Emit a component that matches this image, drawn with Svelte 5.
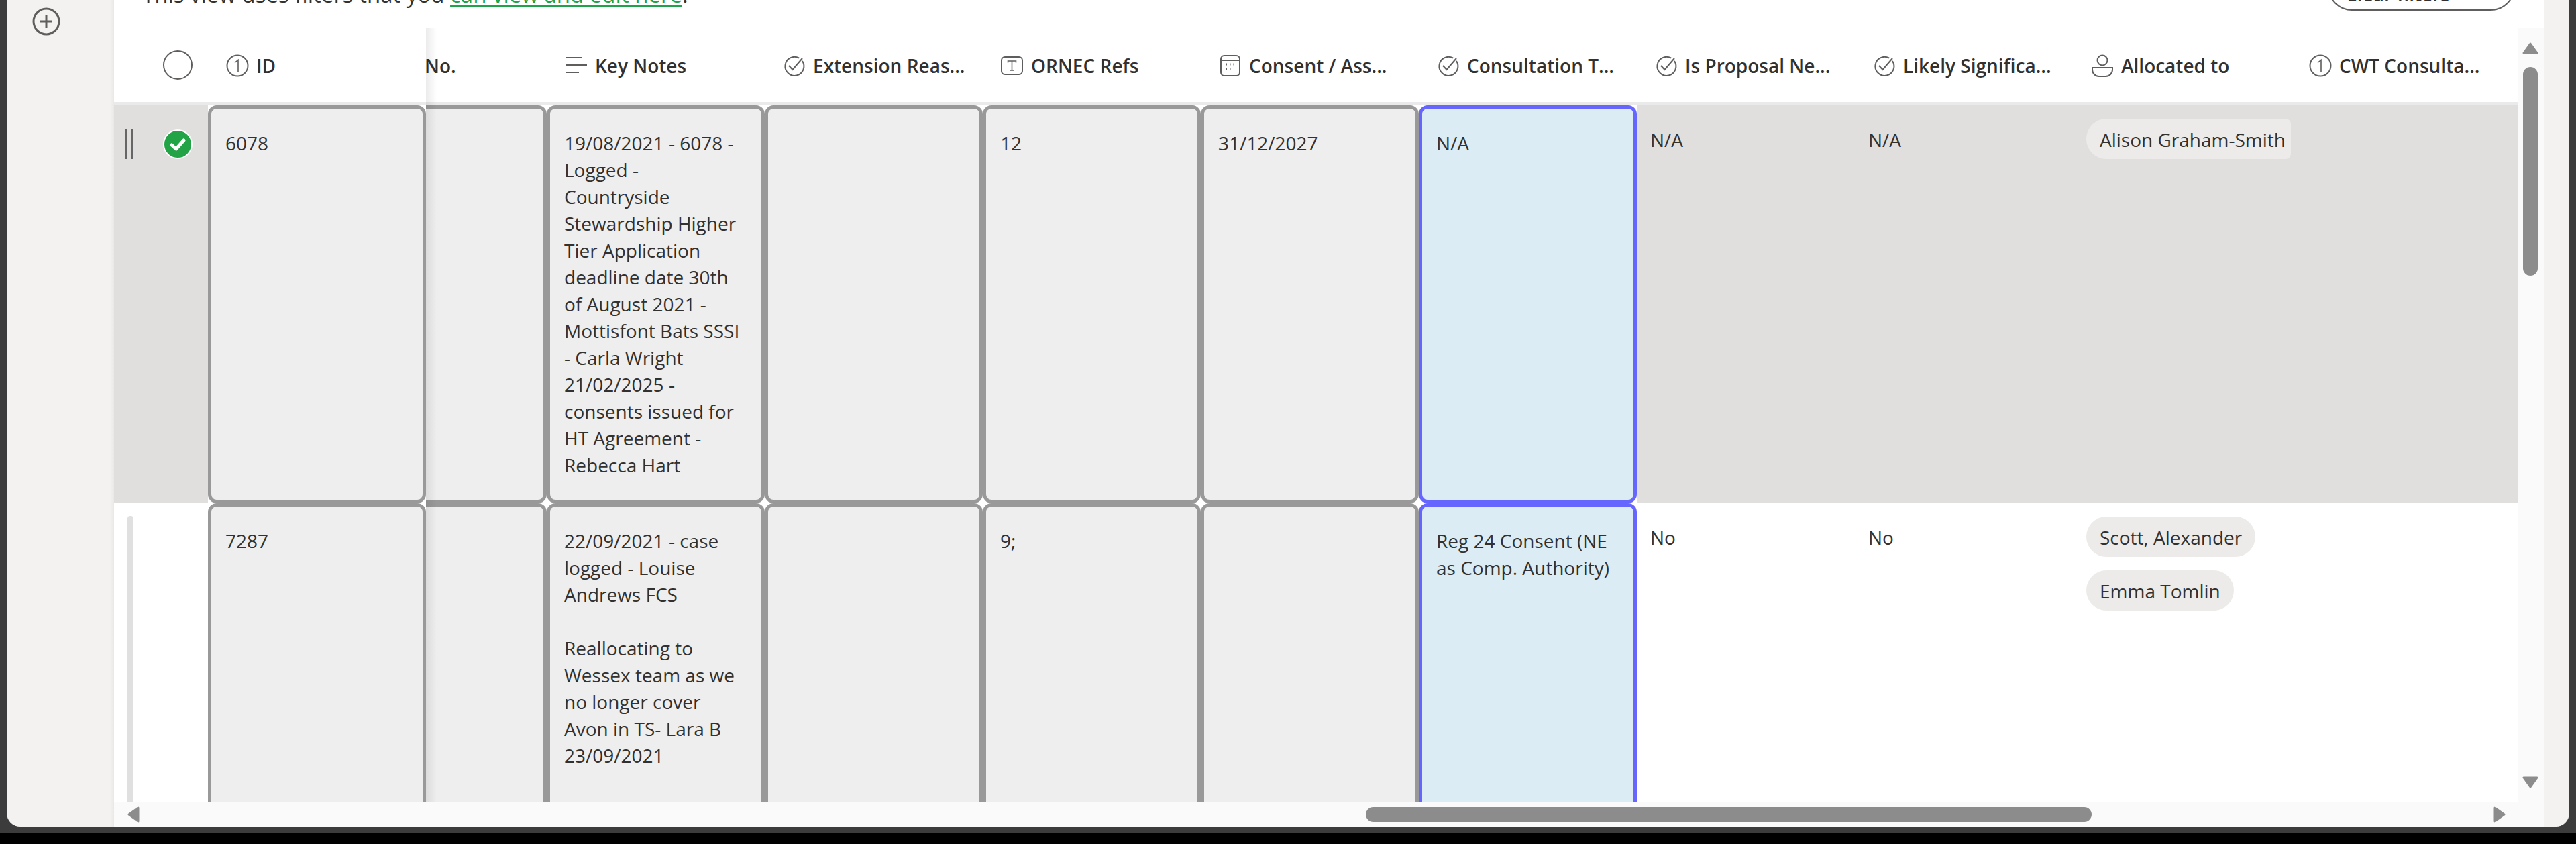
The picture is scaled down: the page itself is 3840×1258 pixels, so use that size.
<script lang="ts">
  const columns = [
    { label: "Key Notes", icon: "notes" },
    { label: "Extension Reas...", icon: "check" },
    { label: "ORNEC Refs", icon: "text" },
    { label: "Consent / Ass...", icon: "date" },
    { label: "Consultation T...", icon: "check" },
    { label: "Is Proposal Ne...", icon: "check" },
    { label: "Likely Significa...", icon: "check" },
    { label: "Allocated to", icon: "person" },
    { label: "CWT Consulta...", icon: "number" },
  ];

  const rows = [
    {
      id: "6078",
      selected: true,
      notes: "19/08/2021 - 6078 -\nLogged -\nCountryside\nStewardship Higher\nTier Application\ndeadline date 30th\nof August 2021 -\nMottisfont Bats SSSI\n- Carla Wright\n21/02/2025 -\nconsents issued for\nHT Agreement -\nRebecca Hart",
      ornec: "12",
      consent: "31/12/2027",
      type: "N/A",
      proposal: "N/A",
      likely: "N/A",
      people: ["Alison Graham-Smith"],
    },
    {
      id: "7287",
      selected: false,
      notes: "22/09/2021 - case\nlogged - Louise\nAndrews FCS\n\nReallocating to\nWessex team as we\nno longer cover\nAvon in TS- Lara B\n23/09/2021\n\nAllocated",
      ornec: "9;",
      consent: "",
      type: "Reg 24 Consent (NE\nas Comp. Authority)",
      proposal: "No",
      likely: "No",
      people: ["Scott, Alexander", "Emma Tomlin"],
    },
  ];
</script>

{#snippet icon(kind)}
  <svg class="col-icon" viewBox="0 0 36 36" fill="none" stroke="#605e5c" stroke-width="2">
    {#if kind === "number"}
      <circle cx="18" cy="18" r="15.5" />
      <path d="M14 13.5 19 9.5V27" stroke-width="1.6" />
    {:else if kind === "notes"}
      <path d="M2 6H26M2 17H34M2 28H22" />
    {:else if kind === "check"}
      <path d="M30 11A14 14 0 1 1 25 6.5" />
      <path d="M10 18 15.5 24 30 7" />
    {:else if kind === "text"}
      <rect x="2" y="5" width="31" height="26" rx="5" />
      <path d="M11.5 13.5V11H23.5V13.5M17.5 11V25M14.5 25H20.5" stroke-width="1.6" />
    {:else if kind === "date"}
      <rect x="4" y="3" width="28" height="30" rx="5" />
      <path d="M4 10H32" />
      <path d="M11.5 16H13M17 16H18.5M22.5 16H24M11.5 23H13M17 23H18.5" stroke-width="3" />
    {:else if kind === "person"}
      <circle cx="18" cy="10" r="7.5" />
      <path d="M3 21H33V24A10 10 0 0 1 23 34H13A10 10 0 0 1 3 24Z" />
    {/if}
  </svg>
{/snippet}

{#snippet arrow(dir)}
  <svg class="arrow {dir}" viewBox="0 0 24 18">
    <path d="M12 2 22 16H2Z" fill="#8c8c8c" stroke="#8c8c8c" stroke-width="3" stroke-linejoin="round" />
  </svg>
{/snippet}

<div class="screen">
  <div class="frame">
    <aside class="rail">
      <svg class="add" viewBox="0 0 42 42" fill="none" stroke="#605e5c" stroke-width="3">
        <circle cx="21" cy="21" r="19" />
        <path d="M21 12V30M12 21H30" />
      </svg>
    </aside>
    <div class="gutter"></div>

    <main class="panel">
      <div class="notice">
        <p>This view uses filters that you <a href="/">can view and edit here</a>.</p>
        <button>Clear filters</button>
      </div>

      <div class="body">
        <div class="grid">
          <div class="head">
            <div class="lead">
              <span class="radio"></span>
            </div>
            <div class="head-cell">{@render icon("number")}<span>ID</span></div>
            <div class="cut head-cut"><div class="head-cell">{@render icon("number")}<span>Case No.</span></div></div>
            {#each columns as col}
              <div class="head-cell">{@render icon(col.icon)}<span>{col.label}</span></div>
            {/each}
          </div>

          {#each rows as row}
            <div class="row" class:picked={row.selected}>
              <div class="lead">
                {#if row.selected}
                  <span class="grip"></span>
                  <svg class="tick" viewBox="0 0 44 44">
                    <circle cx="22" cy="22" r="21" fill="#21a346" stroke="#fff" stroke-width="2" />
                    <path d="M13 23 19.5 29 31 16" fill="none" stroke="#fff" stroke-width="5" stroke-linejoin="round" stroke-linecap="round" />
                  </svg>
                {:else}
                  <span class="grip idle"></span>
                {/if}
              </div>

              <div class="cell"><div class="box">{row.id}</div></div>
              <div class="cut"><div class="cell"><div class="box"></div></div></div>
              <div class="cell"><div class="box">{row.notes}</div></div>
              <div class="cell"><div class="box"></div></div>
              <div class="cell"><div class="box">{row.ornec}</div></div>
              <div class="cell"><div class="box">{row.consent}</div></div>
              <div class="cell"><div class="box focus">{row.type}</div></div>
              <div class="plain">{row.proposal}</div>
              <div class="plain">{row.likely}</div>
              <div class="people">
                {#each row.people as person}
                  <span class="chip" class:long={person.length > 18}>{person}</span>
                {/each}
              </div>
              <div class="plain"></div>
            </div>
          {/each}

          <div class="frozen-shadow"></div>
        </div>

        <div class="vtrack">
          {@render arrow("up")}
          <div class="vthumb"></div>
          {@render arrow("down")}
        </div>
      </div>

      <div class="hbar">
        {@render arrow("left")}
        <div class="hthumb"></div>
        {@render arrow("right")}
      </div>
    </main>

    <div class="edge"></div>
  </div>
</div>

<style>
  :global(body) {
    margin: 0;
    background: #000;
  }

  .screen {
    width: 3840px;
    height: 1258px;
    background: #000;
    overflow: hidden;
    font-family: "Open Sans", "Noto Sans", sans-serif;
    font-size: 28px;
    color: #323130;
  }

  .frame {
    height: 1232px;
    display: flex;
    padding: 0 10px 10px;
    background: #3c3c3c;
  }

  .rail {
    width: 119px;
    flex: none;
    background: #f3f2f1;
    border-right: 1px solid #e8e7e6;
    border-bottom-left-radius: 20px;
  }

  .add {
    display: block;
    width: 42px;
    height: 42px;
    margin: 11px 0 0 38px;
  }

  .gutter {
    width: 40px;
    flex: none;
    background: linear-gradient(90deg, #f3f2f1 85%, #e9e8e7);
  }

  .panel {
    width: 3622px;
    flex: none;
    display: flex;
    flex-direction: column;
    background: #fff;
    overflow: hidden;
  }

  .edge {
    flex: 1;
    background: #f3f2f1;
    border-left: 1px solid #eaeaea;
    border-bottom-right-radius: 20px;
  }

  .notice {
    height: 42px;
    flex: none;
    display: flex;
    justify-content: space-between;
    align-items: flex-end;
    padding: 0 43px 0 42px;
    border-bottom: 1px solid #f5f5f5;
    box-sizing: border-box;
  }

  .notice p {
    margin: 0 0 31px;
    font-size: 33px;
    line-height: 36px;
    white-space: nowrap;
  }

  .notice a {
    color: #1fa34a;
    text-decoration: underline;
    text-decoration-thickness: 3px;
    text-underline-offset: 4px;
  }

  .notice button {
    width: 279px;
    height: 72px;
    margin-bottom: 25px;
    padding: 22px 0 0 24px;
    border: 2px solid #605e5c;
    border-radius: 36px;
    background: #fff;
    font: inherit;
    font-weight: 600;
    color: #323130;
    text-align: left;
  }

  .body {
    flex: 1;
    min-height: 0;
    display: flex;
  }

  .grid {
    position: relative;
    flex: 1;
    min-width: 0;
    overflow: hidden;
  }

  .head {
    display: flex;
    height: 110px;
    border-bottom: 5px solid #eaeaea;
  }

  .head-cell {
    width: 325px;
    flex: none;
    display: flex;
    align-items: center;
    gap: 10px;
    padding: 1px 0 0 26px;
    box-sizing: border-box;
    font-weight: 600;
    white-space: nowrap;
  }

  .col-icon {
    width: 36px;
    height: 36px;
    flex: none;
  }

  .cut {
    width: 180px;
    flex: none;
    overflow: hidden;
    display: flex;
    justify-content: flex-end;
  }

  .cut > * {
    flex: none;
  }

  .head-cut {
    height: 110px;
  }

  .row {
    display: flex;
    height: 593px;
    background: #fff;
  }

  .row.picked {
    background: #e0dfdd;
  }

  .lead {
    width: 140px;
    flex: none;
    position: relative;
  }

  .head .lead {
    display: flex;
    align-items: center;
    padding-left: 73px;
    box-sizing: border-box;
  }

  .radio {
    width: 44px;
    height: 44px;
    border: 2px solid #605e5c;
    border-radius: 50%;
    box-sizing: border-box;
  }

  .grip {
    position: absolute;
    left: 17px;
    top: 35px;
    width: 12px;
    height: 45px;
    border-left: 3px solid #666;
    border-right: 3px solid #666;
    box-sizing: border-box;
  }

  .grip.idle {
    left: 20px;
    top: 19px;
    width: 9px;
    height: 500px;
    border: 0;
    border-radius: 4px;
    background: #e0e0e0;
  }

  .tick {
    position: absolute;
    left: 73px;
    top: 36px;
    width: 44px;
    height: 44px;
  }

  .cell {
    width: 325px;
    flex: none;
    background: #fff;
  }

  .box {
    height: 100%;
    box-sizing: border-box;
    padding: 31px 0 0 21px;
    border: 5px solid #999;
    border-radius: 13px;
    background: #eee;
    line-height: 40px;
    white-space: pre-line;
  }

  .box.focus {
    border-color: #6666ff;
    background: #dbecf4;
  }

  .plain {
    width: 325px;
    flex: none;
    box-sizing: border-box;
    padding: 31px 20px 0;
    line-height: 40px;
  }

  .people {
    width: 325px;
    flex: none;
    box-sizing: border-box;
    padding: 20px 0 0 20px;
    display: flex;
    flex-direction: column;
    align-items: flex-start;
    gap: 20px;
  }

  .chip {
    height: 60px;
    line-height: 62px;
    padding: 0 20px;
    border-radius: 30px;
    background: #edebe9;
    white-space: nowrap;
    box-sizing: border-box;
  }

  .chip.long {
    width: 305px;
    padding-right: 0;
    border-radius: 30px 8px 8px 30px;
    overflow: hidden;
  }

  .frozen-shadow {
    position: absolute;
    left: 465px;
    top: 0;
    bottom: 0;
    width: 16px;
    background: linear-gradient(90deg, rgba(0, 0, 0, 0.08), rgba(0, 0, 0, 0));
  }

  .vtrack {
    width: 39px;
    flex: none;
    display: flex;
    flex-direction: column;
    box-sizing: border-box;
    padding: 21px 0 20px 7px;
    background: #fafafa;
  }

  .arrow {
    display: block;
    width: 24px;
    height: 18px;
    flex: none;
  }

  .arrow.down {
    margin-top: auto;
    transform: rotate(180deg);
  }

  .arrow.left,
  .arrow.right {
    width: 24px;
    height: 22px;
    transform: rotate(-90deg);
  }

  .arrow.right {
    margin-left: 596px;
    transform: rotate(90deg);
  }

  .vthumb {
    width: 22px;
    height: 311px;
    margin: 19px 0 0 1px;
    border-radius: 11px;
    background: #8c8c8c;
  }

  .hbar {
    height: 37px;
    flex: none;
    display: flex;
    align-items: center;
    padding-left: 17px;
    background: #fafafa;
  }

  .hthumb {
    width: 1082px;
    height: 22px;
    margin-left: 1825px;
    border-radius: 11px;
    background: #8c8c8c;
  }
</style>
